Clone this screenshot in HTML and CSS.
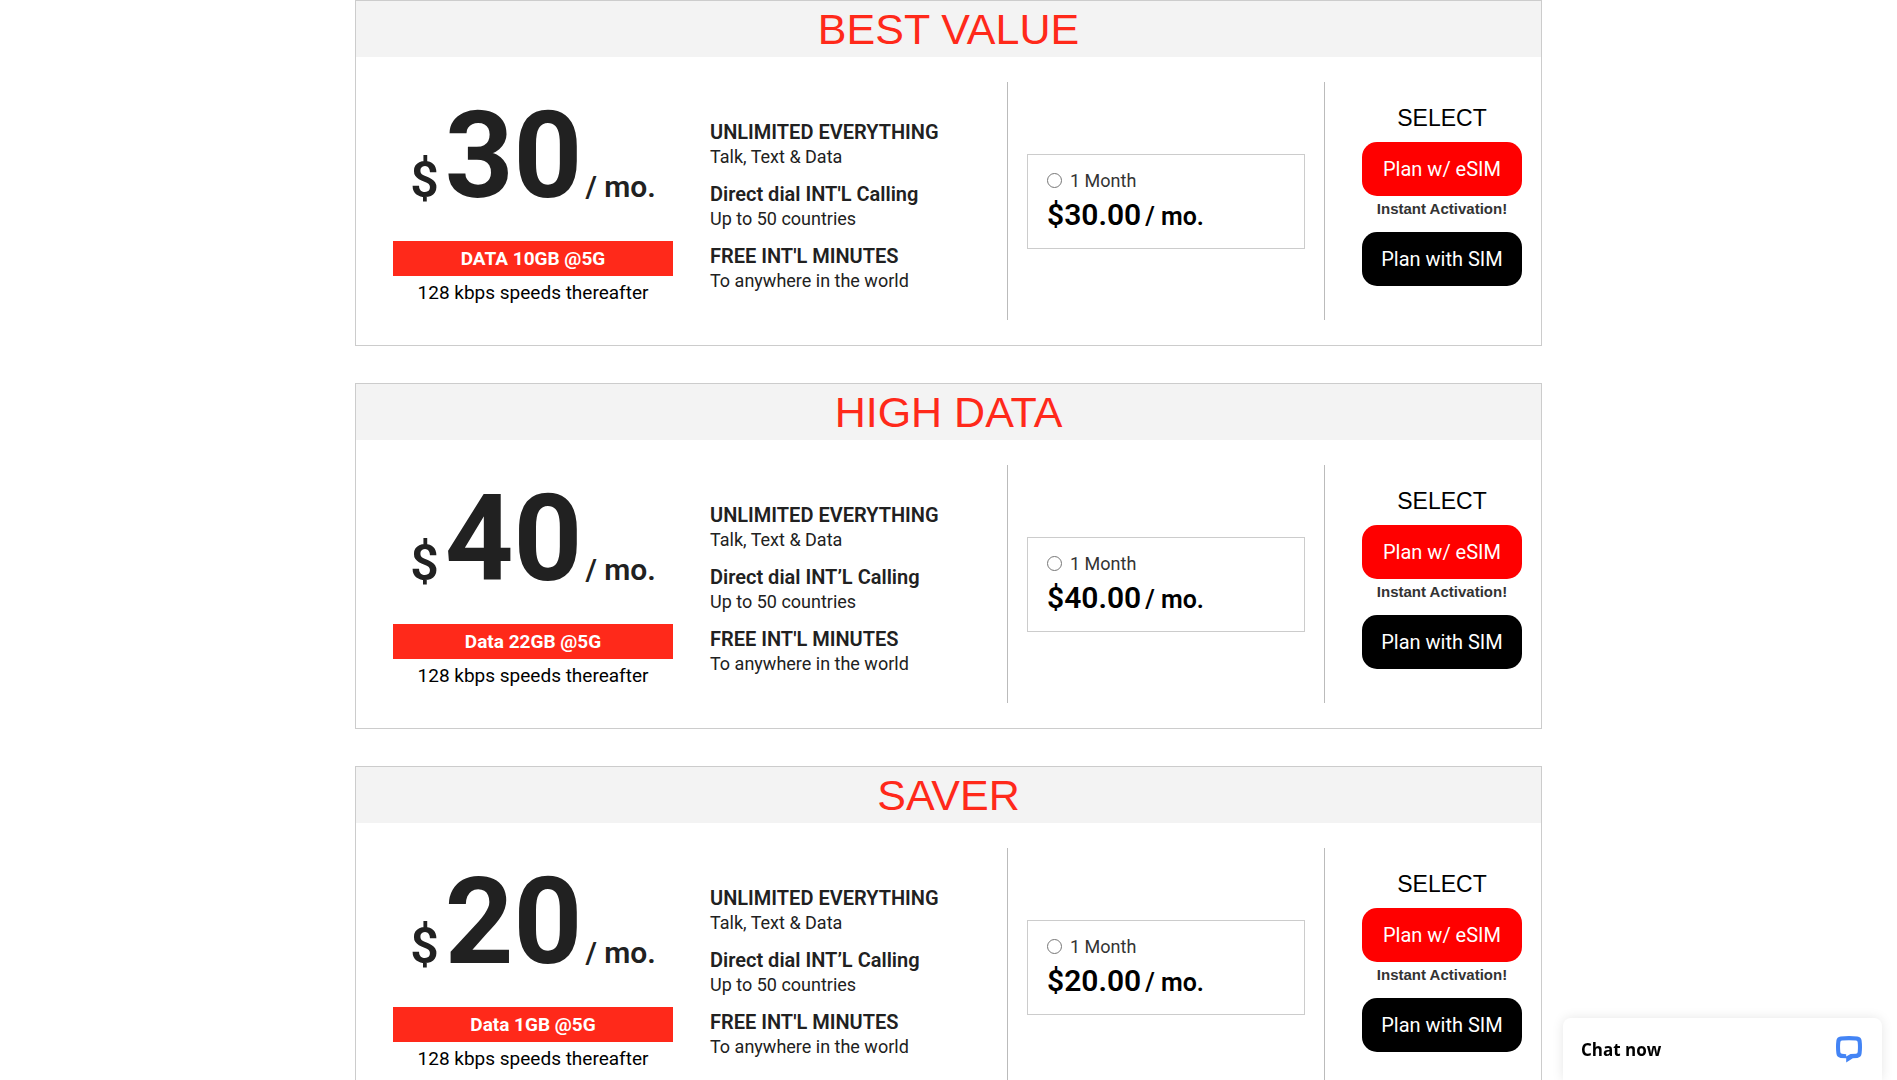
FILE: index.html
```html
<!DOCTYPE html>
<html lang="en">

<head>
    <meta charset="UTF-8">
    <meta name="viewport" content="width=device-width, initial-scale=1.0">
    <title>Plans</title>
    <link rel="stylesheet" href="styles.css">
</head>

<body>
    <main class="plans">
        <section class="plan">
            <h2 class="plan-title">BEST VALUE</h2>
            <div class="plan-body">
                <div class="price">
                    <div class="amount"><span class="dollar">$</span><span class="number">30</span><span class="per">/ mo.</span></div>
                    <div class="data">DATA 10GB @5G</div>
                    <div class="speed">128 kbps speeds thereafter</div>
                </div>
                <dl class="features">
                    <dt>UNLIMITED EVERYTHING</dt>
                    <dd>Talk, Text &amp; Data</dd>
                    <dt>Direct dial INT'L Calling</dt>
                    <dd>Up to 50 countries</dd>
                    <dt>FREE INT'L MINUTES</dt>
                    <dd>To anywhere in the world</dd>
                </dl>
                <div class="term">
                    <div class="option">
                        <div class="month">
                            <input type="radio" name="plan30" id="plan30">
                            <label for="plan30">1 Month</label>
                        </div>
                        <div class="cost">$30.00<span>/ mo.</span></div>
                    </div>
                </div>
                <div class="select">
                    <h3>SELECT</h3>
                    <button type="button" class="btn esim">Plan w/ eSIM</button>
                    <p>Instant Activation!</p>
                    <button type="button" class="btn sim">Plan with SIM</button>
                </div>
            </div>
        </section>

        <section class="plan">
            <h2 class="plan-title">HIGH DATA</h2>
            <div class="plan-body">
                <div class="price">
                    <div class="amount"><span class="dollar">$</span><span class="number">40</span><span class="per">/ mo.</span></div>
                    <div class="data">Data 22GB @5G</div>
                    <div class="speed">128 kbps speeds thereafter</div>
                </div>
                <dl class="features">
                    <dt>UNLIMITED EVERYTHING</dt>
                    <dd>Talk, Text &amp; Data</dd>
                    <dt>Direct dial INT’L Calling</dt>
                    <dd>Up to 50 countries</dd>
                    <dt>FREE INT'L MINUTES</dt>
                    <dd>To anywhere in the world</dd>
                </dl>
                <div class="term">
                    <div class="option">
                        <div class="month">
                            <input type="radio" name="plan40" id="plan40">
                            <label for="plan40">1 Month</label>
                        </div>
                        <div class="cost">$40.00<span>/ mo.</span></div>
                    </div>
                </div>
                <div class="select">
                    <h3>SELECT</h3>
                    <button type="button" class="btn esim">Plan w/ eSIM</button>
                    <p>Instant Activation!</p>
                    <button type="button" class="btn sim">Plan with SIM</button>
                </div>
            </div>
        </section>

        <section class="plan">
            <h2 class="plan-title">SAVER</h2>
            <div class="plan-body">
                <div class="price">
                    <div class="amount"><span class="dollar">$</span><span class="number">20</span><span class="per">/ mo.</span></div>
                    <div class="data">Data 1GB @5G</div>
                    <div class="speed">128 kbps speeds thereafter</div>
                </div>
                <dl class="features">
                    <dt>UNLIMITED EVERYTHING</dt>
                    <dd>Talk, Text &amp; Data</dd>
                    <dt>Direct dial INT’L Calling</dt>
                    <dd>Up to 50 countries</dd>
                    <dt>FREE INT'L MINUTES</dt>
                    <dd>To anywhere in the world</dd>
                </dl>
                <div class="term">
                    <div class="option">
                        <div class="month">
                            <input type="radio" name="plan20" id="plan20">
                            <label for="plan20">1 Month</label>
                        </div>
                        <div class="cost">$20.00<span>/ mo.</span></div>
                    </div>
                </div>
                <div class="select">
                    <h3>SELECT</h3>
                    <button type="button" class="btn esim">Plan w/ eSIM</button>
                    <p>Instant Activation!</p>
                    <button type="button" class="btn sim">Plan with SIM</button>
                </div>
            </div>
        </section>
    </main>

    <button type="button" class="chat">
        Chat now
        <svg width="26" height="27" viewBox="0 0 26 27" fill="#4384f5" aria-hidden="true">
            <path fill-rule="evenodd" d="M4.6.5Q13-.5 21.4.5Q25.2 1 25.6 4.6Q26.4 11 25.6 17.6Q25.2 21.4 21.4 21.9L16.8 22.3L10.2 26.4V22.3L4.6 21.9Q.8 21.4 .4 17.6Q-.4 11 .4 4.6Q.8 1 4.6.5ZM6 4.6Q4.4 4.8 4.3 6.2Q3.8 11 4.3 16Q4.4 17.5 6 17.7L10.2 18.2V20.5L14.5 17.9L20 17.7Q21.6 17.5 21.7 16Q22.2 11 21.7 6.2Q21.6 4.8 20 4.6Q13 4 6 4.6Z" />
        </svg>
    </button>
</body>

</html>
```
FILE: styles.css
```css
* {
    box-sizing: border-box;
}

body {
    margin: 0;
    background: #fff;
    color: #212121;
    font-family: Roboto, Arial, sans-serif;
    font-size: 18px;
}

.plans {
    max-width: 1187px;
    margin: 0 auto;
}

.plan {
    border: 1px solid #ccc;
    margin-bottom: 37px;
}

.plan-title {
    margin: 0;
    background: #f3f3f3;
    color: #ff291a;
    font-family: "Liberation Sans", Arial, sans-serif;
    font-size: 43px;
    font-weight: normal;
    line-height: 56px;
    text-align: center;
}

.plan-body {
    display: grid;
    grid-template-columns: 354fr 297fr 318fr 216fr;
    align-items: center;
    padding: 25px 0;
}

.price {
    padding: 0 37px;
    text-align: center;
}

.amount {
    display: flex;
    align-items: baseline;
    justify-content: center;
    margin-bottom: 21px;
    font-weight: bold;
    line-height: 1;
    white-space: nowrap;
}

.dollar {
    font-size: 50px;
    font-weight: 600;
    margin-right: 6px;
}

.number {
    font-size: 120px;
    line-height: 128px;
}

.per {
    font-size: 30px;
    font-weight: 600;
    margin-left: 3px;
}

.data {
    background: #ff291a;
    color: #fff;
    font-size: 19px;
    font-weight: bold;
    line-height: 35px;
}

.speed {
    color: #000;
    font-size: 19px;
    line-height: 34px;
}

.features {
    margin: 0;
    padding-top: 12px;
}

.features dt {
    font-size: 20px;
    font-weight: 600;
    line-height: 24px;
}

.features dd {
    margin: 0 0 12px;
    line-height: 26px;
}

.features dd:last-child {
    margin-bottom: 0;
}

.term {
    display: flex;
    align-items: center;
    height: 238px;
    padding: 0 19px;
    border-left: 1px solid #bbb;
    border-right: 1px solid #bbb;
}

.option {
    flex: 1;
    padding: 13px 19px 12px;
    border: 1px solid #ccc;
}

.month {
    display: flex;
    align-items: center;
    gap: 8px;
    color: #333;
    line-height: 26px;
}

.month input {
    width: 15px;
    height: 15px;
    margin: 0;
}

.cost {
    display: flex;
    align-items: baseline;
    color: #000;
    font-size: 30px;
    font-weight: 600;
    line-height: 42px;
}

.cost span {
    font-size: 25px;
    line-height: 1;
    margin-left: 4px;
}

.select {
    padding: 0 19px 22px 37px;
    text-align: center;
}

.select h3 {
    margin: 0;
    color: #000;
    font-family: "Liberation Sans", Arial, sans-serif;
    font-size: 23px;
    font-weight: normal;
    line-height: 48px;
}

.select p {
    margin: 0 0 10px;
    color: #333;
    font-family: "Liberation Sans", Arial, sans-serif;
    font-size: 15px;
    font-weight: bold;
    line-height: 26px;
}

.btn {
    display: block;
    width: 100%;
    padding: 0;
    border: 0;
    border-radius: 15px;
    color: #fff;
    font-family: inherit;
    font-size: 20px;
    line-height: 54px;
    cursor: pointer;
}

.esim {
    background: #f00;
}

.sim {
    background: #000;
}

.chat {
    position: fixed;
    right: 15px;
    bottom: 0;
    display: flex;
    align-items: center;
    justify-content: space-between;
    width: 319px;
    height: 62px;
    padding: 0 20px 0 18px;
    border: 0;
    border-radius: 8px 8px 0 0;
    background: #fff;
    box-shadow: 0 0 12px rgba(0, 0, 0, 0.1);
    color: #000;
    font-family: "Open Sans", "Noto Sans", sans-serif;
    font-size: 17px;
    font-weight: bold;
    cursor: pointer;
}
```
